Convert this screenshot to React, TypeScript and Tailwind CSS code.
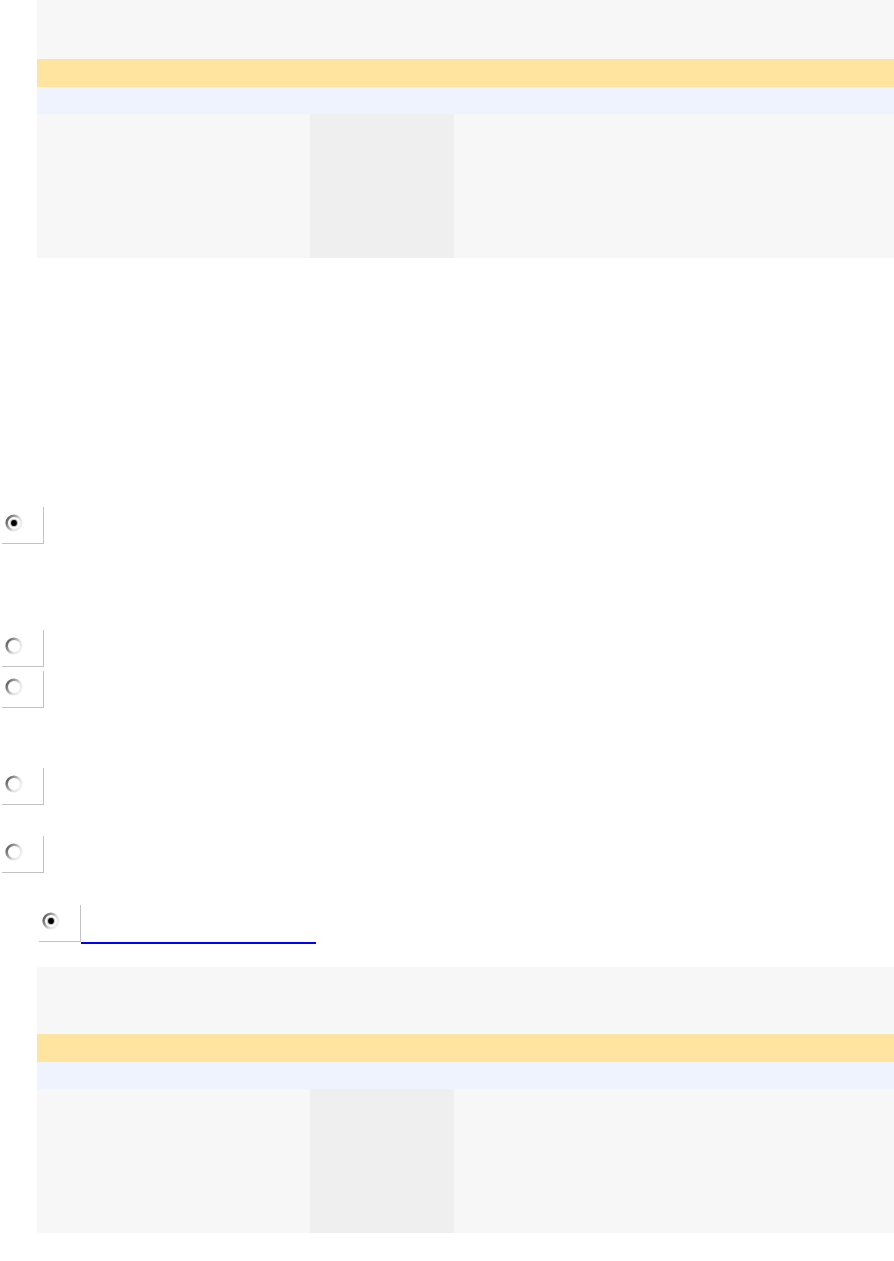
import React from "react";

function Radio({ checked }: { checked?: boolean }) {
  const id = checked ? "rg-on" : "rg-off";
  return (
    <svg width="20" height="20" viewBox="0 0 20 20" className="block">
      <defs>
        <linearGradient id={id} x1="0" y1="0.2" x2="1" y2="0.8">
          <stop offset="0" stopColor="#5a5a5a" />
          <stop offset="0.3" stopColor="#9a9a9a" />
          <stop offset="0.65" stopColor="#e2e2e2" />
          <stop offset="1" stopColor="#f4f4f4" />
        </linearGradient>
      </defs>
      <circle cx="10" cy="10" r="7.3" fill="#ffffff" stroke={`url(#${id})`} strokeWidth="2.6" />
      {checked && (
        <>
          <circle cx="10" cy="10" r="4" fill="#8c8c8c" opacity="0.55" />
          <circle cx="10" cy="10" r="2.9" fill="#000000" />
        </>
      )}
    </svg>
  );
}

function RadioCell({ checked }: { checked?: boolean }) {
  return (
    <div className="w-[42px] h-[37px] border-r border-b border-[#c2c2c2] shrink-0 pt-[6px] pl-[2px]">
      <Radio checked={checked} />
    </div>
  );
}

function Panel({ head }: { head: string }) {
  return (
    <div className="ml-[37px] flex flex-col">
      <div className={`${head} bg-[#f7f7f7]`} />
      <div className="h-[28px] bg-[#fee49f]" />
      <div className="h-[27px] bg-[#eff3fd]" />
      <div className="h-[144px] flex">
        <div className="w-[273px] bg-[#f7f7f7]" />
        <div className="w-[144px] bg-[#efefef]" />
        <div className="flex-1 bg-[#f7f7f7]" />
      </div>
    </div>
  );
}

export default function App() {
  return (
    <div className="w-[894px] min-h-[1261px] bg-white flex flex-col" style={{ fontFamily: '"Liberation Sans", Arial, sans-serif' }}>
      <Panel head="h-[59px]" />

      <div className="mt-[249px] ml-[2px]">
        <RadioCell checked />
      </div>
      <div className="mt-[86px] ml-[2px]">
        <RadioCell />
      </div>
      <div className="mt-[4px] ml-[2px]">
        <RadioCell />
      </div>
      <div className="mt-[60px] ml-[2px]">
        <RadioCell />
      </div>
      <div className="mt-[31px] ml-[2px]">
        <RadioCell />
      </div>

      <div className="mt-[32px] ml-[39px] flex h-[39px]">
        <RadioCell checked />
        <a href="#" className="self-end block w-[235px] h-[2px] bg-[#0000ff]" aria-label="link"></a>
      </div>

      <div className="mt-[23px]">
        <Panel head="h-[67px]" />
      </div>
    </div>
  );
}
